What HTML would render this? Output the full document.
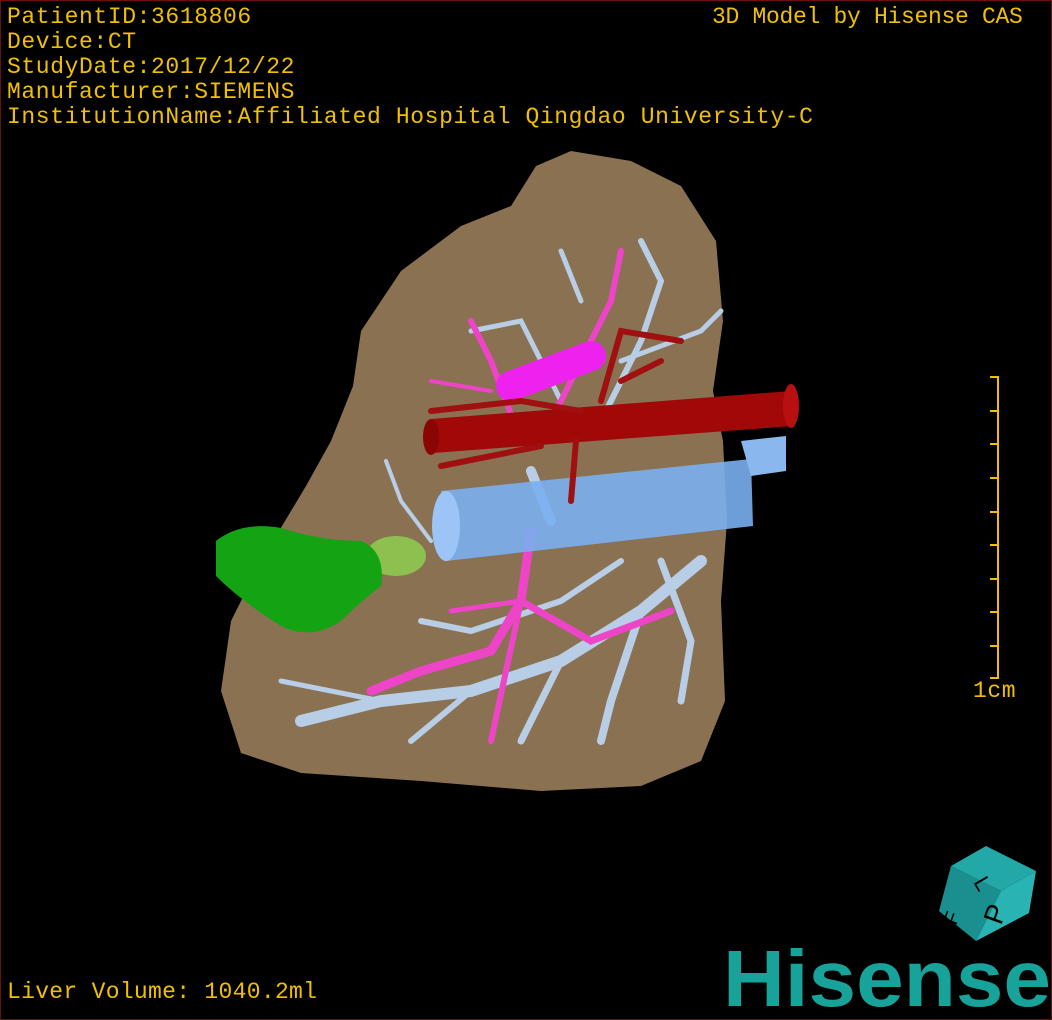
<!DOCTYPE html>
<html><head><meta charset="utf-8"><style>
html,body{margin:0;padding:0;background:#000;}
#w{position:relative;width:1050px;height:1018px;border:1px solid #6b1010;overflow:hidden;background:#000;}
.t{position:absolute;color:#f0c000;font-family:"Liberation Mono","DejaVu Sans Mono",monospace;font-size:23px;line-height:25px;white-space:pre;letter-spacing:0.6px;}
</style></head><body><div id="w">
<svg width="1050" height="1018" style="position:absolute;left:0;top:0">
<path d="M535,165 L570,150 L630,160 L680,185 L715,240 L722,320 L712,390 L722,440 L726,520 L720,600 L724,700 L700,760 L640,785 L540,790 L420,780 L300,772 L240,752 L220,690 L230,620 L260,560 L305,485 L330,440 L352,385 L360,330 L400,270 L460,225 L510,205 Z" fill="#8a7152"/>
<g stroke="#b8cde6" fill="none" stroke-linecap="round">
<path d="M700,560 L640,610 L560,660 L470,690 L380,700 L300,720" stroke-width="12"/>
<path d="M640,610 L610,700 L600,740" stroke-width="8"/>
<path d="M560,660 L520,740" stroke-width="7"/>
<path d="M470,690 L410,740" stroke-width="6"/>
<path d="M660,560 L690,640 L680,700" stroke-width="7"/>
<path d="M380,700 L280,680" stroke-width="5"/>
<path d="M620,560 L560,600 L470,630 L420,620" stroke-width="6"/>
<path d="M600,420 L640,340 L660,280 L640,240" stroke-width="6"/>
<path d="M620,360 L700,330 L720,310" stroke-width="5"/>
<path d="M560,400 L520,320 L470,330" stroke-width="5"/>
<path d="M580,300 L560,250" stroke-width="5"/>
<path d="M430,540 L400,500 L385,460" stroke-width="4"/>
<path d="M530,470 L550,520" stroke-width="10"/>
</g>
<g stroke="#ee44c8" fill="none" stroke-linecap="round">
<path d="M530,530 L520,600 L490,650 L420,670 L370,690" stroke-width="9"/>
<path d="M520,600 L590,640 L670,610" stroke-width="7"/>
<path d="M520,600 L490,740" stroke-width="6"/>
<path d="M520,600 L450,610" stroke-width="5"/>
<path d="M520,440 L490,360 L470,320" stroke-width="6"/>
<path d="M540,440 L610,300 L620,250" stroke-width="6"/>
<path d="M490,390 L430,380" stroke-width="4"/>
</g>
<path d="M510,385 L590,355" stroke="#ee22ee" stroke-width="30" stroke-linecap="round"/>
<ellipse cx="395" cy="555" rx="30" ry="20" fill="#8ec050"/>
<path d="M215,540 Q240,520 280,527 Q320,540 360,540 Q385,550 380,585 Q360,600 340,620 Q310,640 280,625 Q240,600 215,575 Z" fill="#13a313"/>
<path d="M440,490 L750,458 L752,525 L445,560 Z" fill="#7aaff0" opacity="0.9"/>
<ellipse cx="445" cy="525" rx="14" ry="35" fill="#9cc4f6"/>
<path d="M740,440 L785,435 L785,470 L750,475 Z" fill="#8ab8ee"/>
<path d="M430,418 L790,390 L792,425 L432,452 Z" fill="#a10808"/>
<ellipse cx="790" cy="405" rx="8" ry="22" fill="#b81010"/>
<ellipse cx="430" cy="436" rx="8" ry="18" fill="#8a0606"/>
<g stroke="#a01010" fill="none" stroke-width="6" stroke-linecap="round">
<path d="M575,440 L570,500"/><path d="M600,400 L620,330 L680,340"/><path d="M580,410 L520,400 L430,410"/><path d="M620,380 L660,360"/><path d="M540,445 L440,465"/>
</g>
<g stroke="#f0c000" stroke-width="2">
<line x1="997" y1="375" x2="997" y2="678"/>
<line x1="989" y1="376" x2="997" y2="376"/><line x1="989" y1="410" x2="997" y2="410"/><line x1="989" y1="443" x2="997" y2="443"/><line x1="989" y1="477" x2="997" y2="477"/><line x1="989" y1="511" x2="997" y2="511"/><line x1="989" y1="544" x2="997" y2="544"/><line x1="989" y1="578" x2="997" y2="578"/><line x1="989" y1="611" x2="997" y2="611"/><line x1="989" y1="645" x2="997" y2="645"/><line x1="989" y1="677" x2="997" y2="677"/>
</g>
<path d="M950,865 L985,845 L1035,870 L1000,890 Z" fill="#23a8a8"/>
<path d="M950,865 L1000,890 L975,940 L938,910 Z" fill="#1a8f8f"/>
<path d="M1000,890 L1035,870 L1028,912 L975,940 Z" fill="#2ab3b3"/>
<text x="972" y="881" font-family="Liberation Sans,sans-serif" font-size="22" fill="#000" transform="rotate(60 972 881)">L</text>
<text x="1000" y="925" font-family="Liberation Sans,sans-serif" font-size="28" fill="#000" transform="rotate(-70 1000 925)">P</text>
<text x="955" y="925" font-family="Liberation Sans,sans-serif" font-size="20" fill="#000" transform="rotate(-70 955 925)">F</text>
<text x="722" y="1005" font-family="Liberation Sans,sans-serif" font-weight="bold" font-size="80" fill="#17a39a" textLength="328" lengthAdjust="spacingAndGlyphs">Hisense</text>
</svg>
<div class="t" style="left:6px;top:4px">PatientID:3618806
Device:CT
StudyDate:2017/12/22
Manufacturer:SIEMENS
InstitutionName:Affiliated Hospital Qingdao University-C</div>
<div class="t" style="left:711px;top:4px;letter-spacing:-0.3px">3D Model by Hisense CAS</div>
<div class="t" style="left:972px;top:678px">1cm</div>
<div class="t" style="left:6px;top:979px;letter-spacing:0.3px">Liver Volume: 1040.2ml</div>
</div></body></html>
